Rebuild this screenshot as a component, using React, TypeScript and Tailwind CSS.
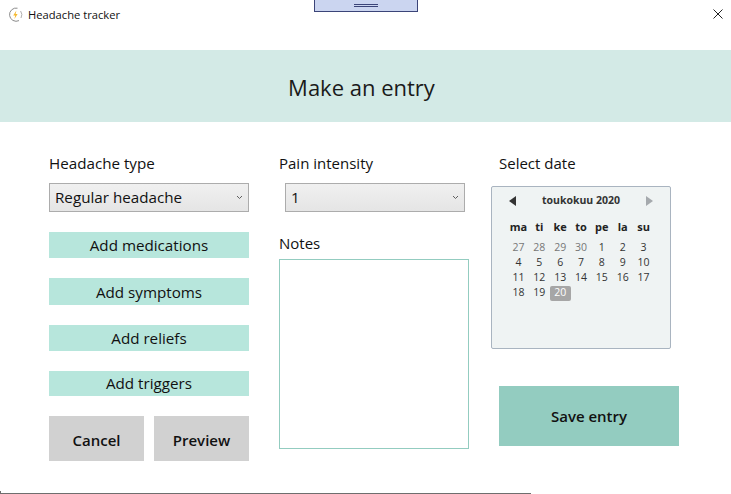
const weekdays = ['ma', 'ti', 'ke', 'to', 'pe', 'la', 'su'];
const days = [
  ['27', '28', '29', '30', '1', '2', '3'],
  ['4', '5', '6', '7', '8', '9', '10'],
  ['11', '12', '13', '14', '15', '16', '17'],
  ['18', '19', '20'],
];
const addButtons = [
  { label: 'Add medications', height: 'h-[26px] pt-[1px]' },
  { label: 'Add symptoms', height: 'h-[27px] pt-[1px]' },
  { label: 'Add reliefs', height: 'h-[26px] pt-[1px]' },
  { label: 'Add triggers', height: 'h-[25px]' },
];

function Chevron() {
  return (
    <svg width="7" height="5" viewBox="0 0 7 5" className="text-[#606060]">
      <path d="M1 1l2.5 2.5L6 1" fill="none" stroke="currentColor" strokeWidth="1" />
    </svg>
  );
}

function Select({ value, className }: { value: string; className: string }) {
  return (
    <div className={`flex h-[29px] items-center justify-between border border-[#acacac] bg-gradient-to-b from-[#f0f0f0] to-[#e5e5e5] pl-[5px] pr-[5px] text-[15.2px] text-[#111] ${className}`}>
      <span>{value}</span>
      <Chevron />
    </div>
  );
}

function AppIcon() {
  return (
    <svg width="15" height="16" viewBox="0 0 15 16">
      <path d="M9.5 1.2A6.6 6.6 0 1 0 11 13.6" fill="none" stroke="#8c8c8c" strokeWidth="1" />
      <path d="M12.6 4A6.6 6.6 0 0 1 13 11" fill="none" stroke="#b0b0b0" strokeWidth="1" />
      <path d="M8.4 3.6L5.2 8.4h2l-.8 3.6 3.2-5h-2z" fill="#f5b82e" />
    </svg>
  );
}

function Calendar() {
  return (
    <div className="-ml-2 h-[163px] w-[180px] rounded-[2px] border border-[#a9b4c0] bg-[#eff3f3] px-[16px] pt-[4px] font-['Open_Sans',sans-serif] text-[10.5px] text-[#333]">
      <div className="flex h-[20px] items-center justify-between px-[1px]">
        <svg width="8" height="10" viewBox="0 0 8 10"><path d="M7 0v10L0 5z" fill="#333" /></svg>
        <span className="text-[10.5px] font-bold text-[#333]">toukokuu 2020</span>
        <svg width="8" height="10" viewBox="0 0 8 10"><path d="M1 0v10l7-5z" fill="#a5a9ad" /></svg>
      </div>
      <div className="mt-[8px] grid grid-cols-7 text-[11px] font-bold text-[#222]">
        {weekdays.map((d) => (
          <span key={d} className="text-center">{d}</span>
        ))}
      </div>
      <div className="mt-[5px] grid grid-cols-7">
        {days.flat().map((d, i) => (
          <span
            key={i}
            className={`flex h-[15px] items-center justify-center ${i < 4 ? 'text-[#777]' : ''} ${d === '20' ? 'rounded-[2px] bg-[#a6a6a6] font-medium text-white' : ''}`}
          >
            {d}
          </span>
        ))}
      </div>
    </div>
  );
}

export default function App() {
  return (
    <div className="relative h-[494px] w-[731px] overflow-hidden bg-white font-['Open_Sans',sans-serif] text-[#111]">
      {/* Docking tab poking in from the top */}
      <div className="absolute left-[314px] top-0 flex h-[12px] w-[104px] items-end justify-center border-x border-b border-[#3b4478] bg-[#cbd5f0] pb-[4px]">
        <div className="h-[3px] w-[24px] border-y border-[#3b4478]" />
      </div>

      {/* Title bar */}
      <div className="flex h-[50px] items-start justify-between pl-[8px] pr-[8px] pt-[7px]">
        <div className="flex items-center gap-[5px] text-[11.2px] leading-[16px] text-[#111]">
          <AppIcon />
          Headache tracker
        </div>
        <svg width="10" height="10" viewBox="0 0 10 10" className="mt-[2px]">
          <path d="M.5.5l9 9M9.5.5l-9 9" stroke="#222" strokeWidth="1" />
        </svg>
      </div>

      {/* Banner */}
      <div className="flex h-[72px] items-center justify-center bg-[#d3eae6] pr-[8px] pt-[3px] text-[22px] text-[#1a1a1a]">
        Make an entry
      </div>

      <div className="flex pl-[49px] pt-[30px]">
        {/* Left column */}
        <div className="flex w-[200px] flex-col">
          <div className="h-[22px] text-[15.2px] leading-[22px]">Headache type</div>
          <Select value="Regular headache" className="mt-[9px]" />
          <div className="mt-[20px] flex flex-col gap-[20px]">
            {addButtons.map((b) => (
              <div key={b.label} className={`flex items-center justify-center bg-[#b7e6dc] text-[15.2px] ${b.height}`}>
                {b.label}
              </div>
            ))}
          </div>
          <div className="mt-[20px] flex gap-[10px]">
            <div className="flex h-[45px] w-[95px] items-center justify-center bg-[#d1d1d1] pt-[3px] text-[15px] font-semibold">Cancel</div>
            <div className="flex h-[45px] w-[95px] items-center justify-center bg-[#d1d1d1] pt-[3px] text-[15px] font-semibold">Preview</div>
          </div>
        </div>

        {/* Middle column */}
        <div className="ml-[30px] flex w-[190px] flex-col">
          <div className="h-[22px] text-[15px] leading-[22px]">Pain intensity</div>
          <Select value="1" className="ml-[6px] mt-[9px] w-[180px]" />
          <div className="mt-[20px] h-[22px] text-[15px] leading-[22px]">Notes</div>
          <div className="mt-[5px] h-[190px] border border-[#93ccc0] bg-white" />
        </div>

        {/* Right column */}
        <div className="ml-[30px] flex w-[180px] flex-col">
          <div className="h-[22px] text-[15px] leading-[22px]">Select date</div>
          <div className="mt-[12px]">
            <Calendar />
          </div>
          <div className="mt-[37px] flex h-[60px] items-center justify-center bg-[#93ccc0] text-[15px] font-semibold">
            Save entry
          </div>
        </div>
      </div>

      {/* Window edge at the bottom */}
      <div className="absolute bottom-0 left-0 h-px w-[531px] bg-[#6e6e6e]" />
      <div className="absolute bottom-0 left-0 h-[3px] w-px bg-[#6e6e6e]" />
    </div>
  );
}
